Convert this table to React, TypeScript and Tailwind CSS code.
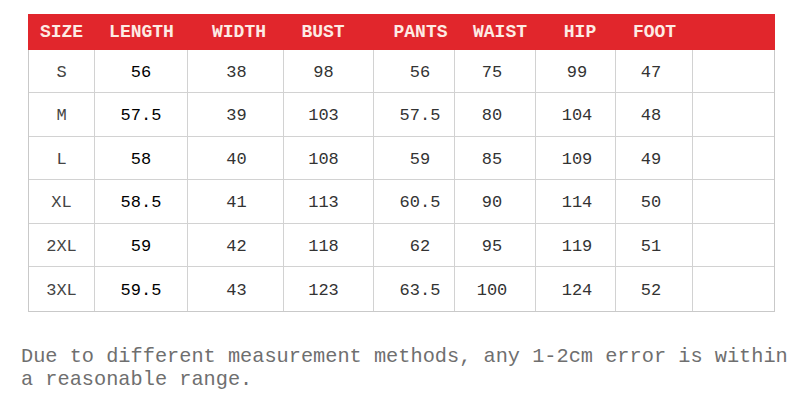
const headers = ["SIZE", "LENGTH", "WIDTH", "BUST", "PANTS", "WAIST", "HIP", "FOOT", ""];

const rows = [
  ["S", "56", "38", "98", "56", "75", "99", "47"],
  ["M", "57.5", "39", "103", "57.5", "80", "104", "48"],
  ["L", "58", "40", "108", "59", "85", "109", "49"],
  ["XL", "58.5", "41", "113", "60.5", "90", "114", "50"],
  ["2XL", "59", "42", "118", "62", "95", "119", "51"],
  ["3XL", "59.5", "43", "123", "63.5", "100", "124", "52"],
];

// small nudges so labels sit where the picture has them
const headPad = ["", "", "pl-[6px]", "pr-[12px]", "pl-[12px]", "pl-[9px]", "pl-[8px]", "", ""];
const cellPad = ["", "", "pl-[2px]", "pr-[10px]", "pl-[12px]", "pr-[6px]", "pl-[3px]", "pr-[6px]", ""];

const rowHeights = ["h-[43px]", "h-[44px]", "h-[43px]", "h-[44px]", "h-[43px]", "h-[44px]"];

export default function App() {
  return (
    <div className="w-[800px] h-[408px] bg-white overflow-hidden pt-[14px]">
      <div className="ml-[28px] w-[747px]">
        <div className="grid grid-cols-[67px_93px_96px_90px_81px_81px_80px_77px_82px] h-[36px] bg-[#e1262c]">
          {headers.map((h, i) => (
            <div
              key={i}
              className={`flex items-center justify-center pt-[1px] text-[18px] font-bold text-[#fdebe4] font-['Liberation_Mono',monospace] ${headPad[i]}`}
            >
              {h}
            </div>
          ))}
        </div>
        <div className="border-l border-r border-b border-[#c9c9c9]">
          {rows.map((row, r) => (
            <div
              key={r}
              className={`grid grid-cols-[66px_93px_96px_90px_81px_81px_80px_77px_81px] ${rowHeights[r]} ${r < rows.length - 1 ? "border-b border-[#d2d2d2]" : ""}`}
            >
              {[...row, ""].map((v, c) => (
                <div
                  key={c}
                  className={`flex items-center justify-center pt-[3px] text-[17px] font-['Liberation_Mono',monospace] ${
                    c < 8 ? "border-r border-[#d2d2d2]" : ""
                  } ${c === 1 ? "text-black" : c === 0 ? "text-[#444]" : "text-[#333]"} ${cellPad[c]}`}
                >
                  {v}
                </div>
              ))}
            </div>
          ))}
        </div>
      </div>
      <p className="mt-[33px] ml-[21px] w-[785px] text-[20.3px] leading-[23px] text-[#6f6f6f] font-['Liberation_Mono',monospace]">
        Due to different measurement methods, any 1-2cm error is within a reasonable range.
      </p>
    </div>
  );
}
